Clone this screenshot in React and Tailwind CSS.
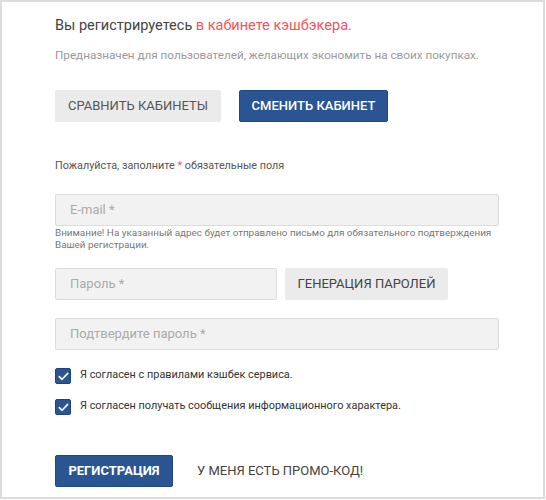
import React from "react";

function Check() {
  return (
    <span className="flex h-[16px] w-[16px] shrink-0 items-center justify-center rounded-[2px] border border-[#1e447c] bg-[#2b5592]">
      <svg width="11" height="9" viewBox="0 0 11 9" fill="none">
        <path d="M1.3 4.6 L4.1 7.3 L9.7 1.4" stroke="white" strokeWidth="1.6" strokeLinecap="round" strokeLinejoin="round" />
      </svg>
    </span>
  );
}

export default function App() {
  return (
    <div className="h-[500px] w-[546px] bg-white font-['Roboto',sans-serif]">
      <div className="flex h-[499px] w-[545px] flex-col border-2 border-[#dcdcdc] pl-[53px] pt-[15px]">
        <div className="text-[14.5px] leading-[18px] text-[#444]">
          Вы регистрируетесь <span className="text-[#f2545b]">в кабинете кэшбэкера.</span>
        </div>
        <div className="mt-[13px] text-[11.7px] leading-[14px] text-[#9a9a9a]">
          Предназначен для пользователей, желающих экономить на своих покупках.
        </div>
        <div className="mt-[28px] flex gap-[18px]">
          <button className="flex h-[32px] w-[166px] items-center justify-center rounded-[2px] bg-[#ebebeb] text-[13px] text-[#555]">
            СРАВНИТЬ КАБИНЕТЫ
          </button>
          <button className="flex h-[32px] w-[149px] items-center justify-center rounded-[2px] border border-[#1f4780] bg-[#2b5592] text-[13px] font-medium text-white">
            СМЕНИТЬ КАБИНЕТ
          </button>
        </div>
        <div className="mt-[37px] text-[10.8px] leading-[13px] text-[#555]">
          Пожалуйста, заполните <span className="text-[#f2545b]">*</span> обязательные поля
        </div>
        <div className="mt-[22px] flex h-[32px] w-[444px] items-center rounded-[2px] border border-[#dcdcdc] bg-[#f2f2f2] pl-[14px] text-[13px] text-[#aaa]">
          E-mail *
        </div>
        <div className="mt-[1px] text-[9.9px] leading-[12px] text-[#777]">
          Внимание! На указанный адрес будет отправлено письмо для обязательного подтверждения
          <br />
          Вашей регистрации.
        </div>
        <div className="mt-[17px] flex gap-[8px]">
          <div className="flex h-[32px] w-[222px] items-center rounded-[2px] border border-[#dcdcdc] bg-[#f2f2f2] pl-[14px] text-[13px] text-[#aaa]">
            Пароль *
          </div>
          <button className="flex h-[32px] w-[163px] items-center justify-center rounded-[2px] bg-[#ebebeb] text-[13px] text-[#444]">
            ГЕНЕРАЦИЯ ПАРОЛЕЙ
          </button>
        </div>
        <div className="mt-[18px] flex h-[32px] w-[444px] items-center rounded-[2px] border border-[#dcdcdc] bg-[#f2f2f2] pl-[14px] text-[13px] text-[#aaa]">
          Подтвердите пароль *
        </div>
        <div className="mt-[18px] flex h-[16px] items-center gap-[9px]">
          <Check />
          <span className="-mt-[3px] text-[10.9px] leading-[13px] text-[#333]">Я согласен с правилами кэшбек сервиса.</span>
        </div>
        <div className="mt-[15px] flex h-[16px] items-center gap-[9px]">
          <Check />
          <span className="-mt-[3px] text-[10.9px] leading-[13px] text-[#333]">Я согласен получать сообщения информационного характера.</span>
        </div>
        <div className="mt-[40px] flex items-center">
          <button className="flex h-[32px] w-[118px] items-center justify-center rounded-[2px] border border-[#1f4780] bg-[#2b5592] text-[13px] font-bold text-white">
            РЕГИСТРАЦИЯ
          </button>
          <span className="ml-[24px] text-[13px] text-[#444]">У МЕНЯ ЕСТЬ ПРОМО-КОД!</span>
        </div>
      </div>
    </div>
  );
}
